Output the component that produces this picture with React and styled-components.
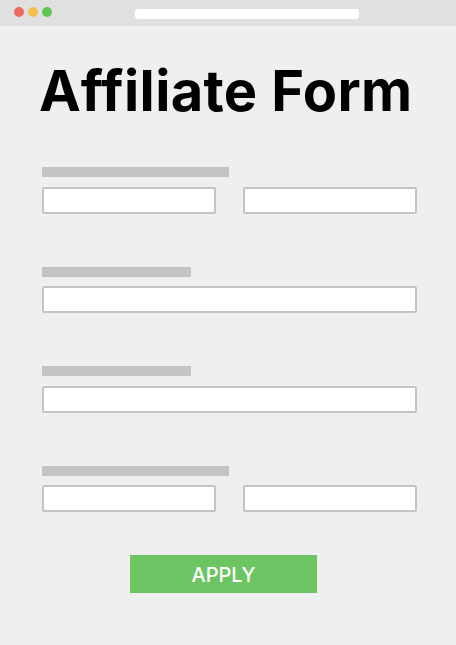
import React from "react";
import styled, { createGlobalStyle } from "styled-components";

const GlobalStyle = createGlobalStyle`
  html, body {
    margin: 0;
    padding: 0;
    background: #efefef;
  }
  * {
    box-sizing: border-box;
  }
`;

const Page = styled.div`
  width: 456px;
  height: 645px;
  background: #efefef;
  font-family: "Liberation Sans", Arial, sans-serif;
  overflow: hidden;
`;

const TopBar = styled.div`
  height: 26px;
  background: #e0e0e0;
  display: flex;
  align-items: center;
  padding-left: 14px;
`;

const Dots = styled.div`
  display: flex;
  gap: 4px;
  margin-top: -2px;
`;

const Dot = styled.span`
  width: 10px;
  height: 10px;
  border-radius: 50%;
  background: ${(p) => p.color};
`;

const UrlBar = styled.div`
  width: 224px;
  height: 10px;
  background: #ffffff;
  border-radius: 3px;
  margin-left: 83px;
  margin-top: 2px;
`;

const Content = styled.div`
  padding: 37px 39px 0 42px;
`;

const Title = styled.h1`
  margin: 0 0 47px -3px;
  font-family: Inter, "Liberation Sans", Arial, sans-serif;
  font-size: 56px;
  line-height: 57px;
  font-weight: 700;
  color: #000;
  letter-spacing: 0.35px;
`;

const Section = styled.div`
  display: flex;
  flex-direction: column;
  gap: 9.7px;
  margin-bottom: 52.9px;
`;

const Label = styled.div`
  width: ${(p) => p.width}px;
  height: 10px;
  background: #c4c4c4;
`;

const Row = styled.div`
  display: flex;
  gap: 27px;
`;

const Input = styled.div`
  flex: 1;
  height: 27px;
  background: #ffffff;
  border: 2px solid #c4c4c4;
  border-radius: 2px;
`;

const ButtonWrap = styled.div`
  display: flex;
  margin-top: -10.4px;
  padding-left: 88px;
`;

const Button = styled.button`
  width: 187px;
  height: 38px;
  border: none;
  background: #6cc462;
  color: #ffffff;
  font-family: Inter, "Liberation Sans", Arial, sans-serif;
  font-weight: 500;
  font-size: 20px;
  padding: 2px 0 0;
  cursor: pointer;
`;

const sections = [
  { label: 187, split: true },
  { label: 149, split: false },
  { label: 149, split: false },
  { label: 187, split: true },
];

export default function App() {
  return (
    <Page>
      <GlobalStyle />
      <TopBar>
        <Dots>
          <Dot color="#ec6a5e" />
          <Dot color="#f4bf4f" />
          <Dot color="#61c554" />
        </Dots>
        <UrlBar />
      </TopBar>
      <Content>
        <Title>Affiliate Form</Title>
        {sections.map((s, i) => (
          <Section key={i}>
            <Label width={s.label} />
            <Row>
              <Input />
              {s.split && <Input />}
            </Row>
          </Section>
        ))}
        <ButtonWrap>
          <Button>APPLY</Button>
        </ButtonWrap>
      </Content>
    </Page>
  );
}
